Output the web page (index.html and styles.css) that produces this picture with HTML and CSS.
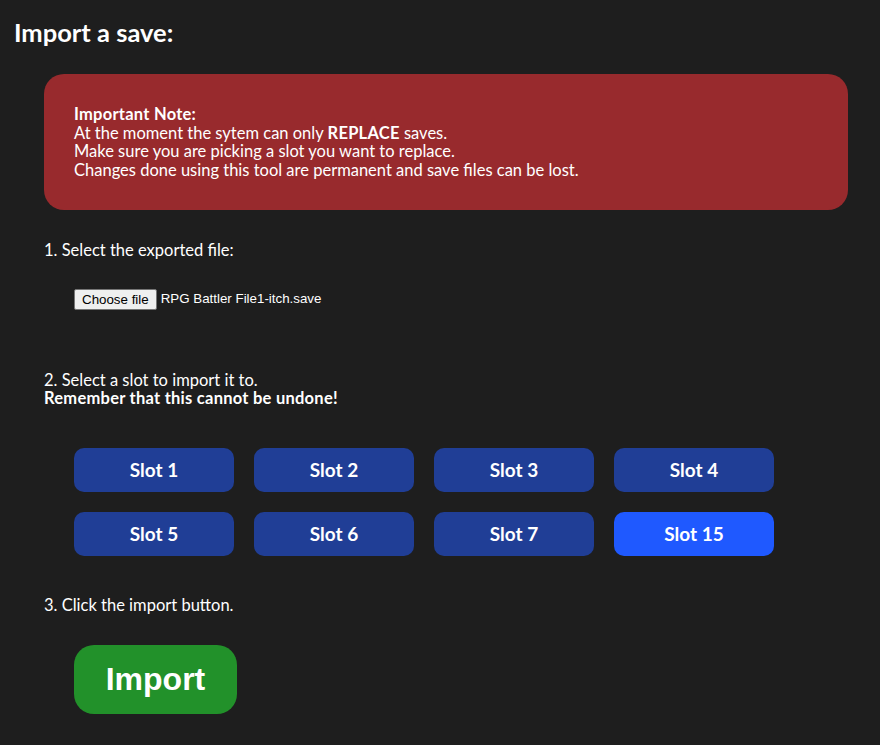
FILE: index.html
```html
<!DOCTYPE html>
<html lang="en">
<head>
    <meta charset="UTF-8">
    <meta name="viewport" content="width=device-width, initial-scale=1.0">
    <title>Import a save</title>
    <link rel="stylesheet" href="styles.css">
</head>
<body>

    <h2 class="title">Import a save:</h2>

    <div class="content">
        <div class="note">
            <strong>Important Note:</strong><br>
            At the moment the sytem can only <strong>REPLACE</strong> saves.<br>
            Make sure you are picking a slot you want to replace.<br>
            Changes done using this tool are permanent and save files can be lost.
        </div>

        <p class="step">1. Select the exported file:</p>
        <div class="file-row">
            <span class="file-btn">Choose file</span>
            <span class="file-name">RPG Battler File1-itch.save</span>
        </div>

        <p class="step">2. Select a slot to import it to.<br>
            <strong>Remember that this cannot be undone!</strong></p>

        <div class="slots">
            <button class="slot">Slot 1</button>
            <button class="slot">Slot 2</button>
            <button class="slot">Slot 3</button>
            <button class="slot">Slot 4</button>
            <button class="slot">Slot 5</button>
            <button class="slot">Slot 6</button>
            <button class="slot">Slot 7</button>
            <button class="slot selected">Slot 15</button>
        </div>

        <p class="step">3. Click the import button.</p>
        <div class="import-row">
            <button class="import-btn">Import</button>
        </div>
    </div>

</body>
</html>
```

FILE: styles.css
```css
* {
    margin: 0;
    padding: 0;
    box-sizing: border-box;
}

body {
    font-family: Lato, "Noto Sans", sans-serif;
    font-size: 16.5px;
    line-height: 18.7px;
    background-color: #1e1e1e;
    color: #ffffff;
    padding: 18px 14px;
}

strong {
    letter-spacing: 0.25px;
}

.title {
    font-size: 25.5px;
    line-height: 28px;
    font-weight: bold;
}

.content {
    padding: 28px 18px 0 30px;
}

.note {
    background-color: #982a2d;
    border-radius: 20px;
    padding: 31px 30px 30px 30px;
}

.step {
    margin-top: 31px;
}

.file-row {
    display: flex;
    align-items: center;
    gap: 4px;
    padding: 29px 0 0 30px;
    margin-bottom: 61px;
}

.file-btn {
    font-family: "Liberation Sans", Arial, sans-serif;
    font-size: 13.33px;
    line-height: 15px;
    color: #000;
    background-color: #efefef;
    border: 1px solid #767676;
    border-radius: 2px;
    padding: 2px 7px;
}

.file-name {
    font-family: "Liberation Sans", Arial, sans-serif;
    font-size: 13.33px;
    color: #fff;
}

.slots {
    display: grid;
    grid-template-columns: repeat(4, 160px);
    gap: 20px;
    padding: 40px 0 0 30px;
}

.slot {
    height: 44px;
    border: none;
    border-radius: 10px;
    background-color: #203e96;
    color: #fff;
    font-family: Lato, "Noto Sans", sans-serif;
    font-size: 19px;
    font-weight: bold;
    cursor: pointer;
}

.slot.selected {
    background-color: #1f59ff;
}

.slots + .step {
    margin-top: 40px;
}

.import-row {
    padding: 30px 0 0 30px;
}

.import-btn {
    width: 163px;
    height: 69px;
    border: none;
    border-radius: 20px;
    background-color: #22912a;
    color: #fff;
    font-family: "Liberation Sans", Arial, sans-serif;
    font-size: 32px;
    font-weight: bold;
    cursor: pointer;
}
```
